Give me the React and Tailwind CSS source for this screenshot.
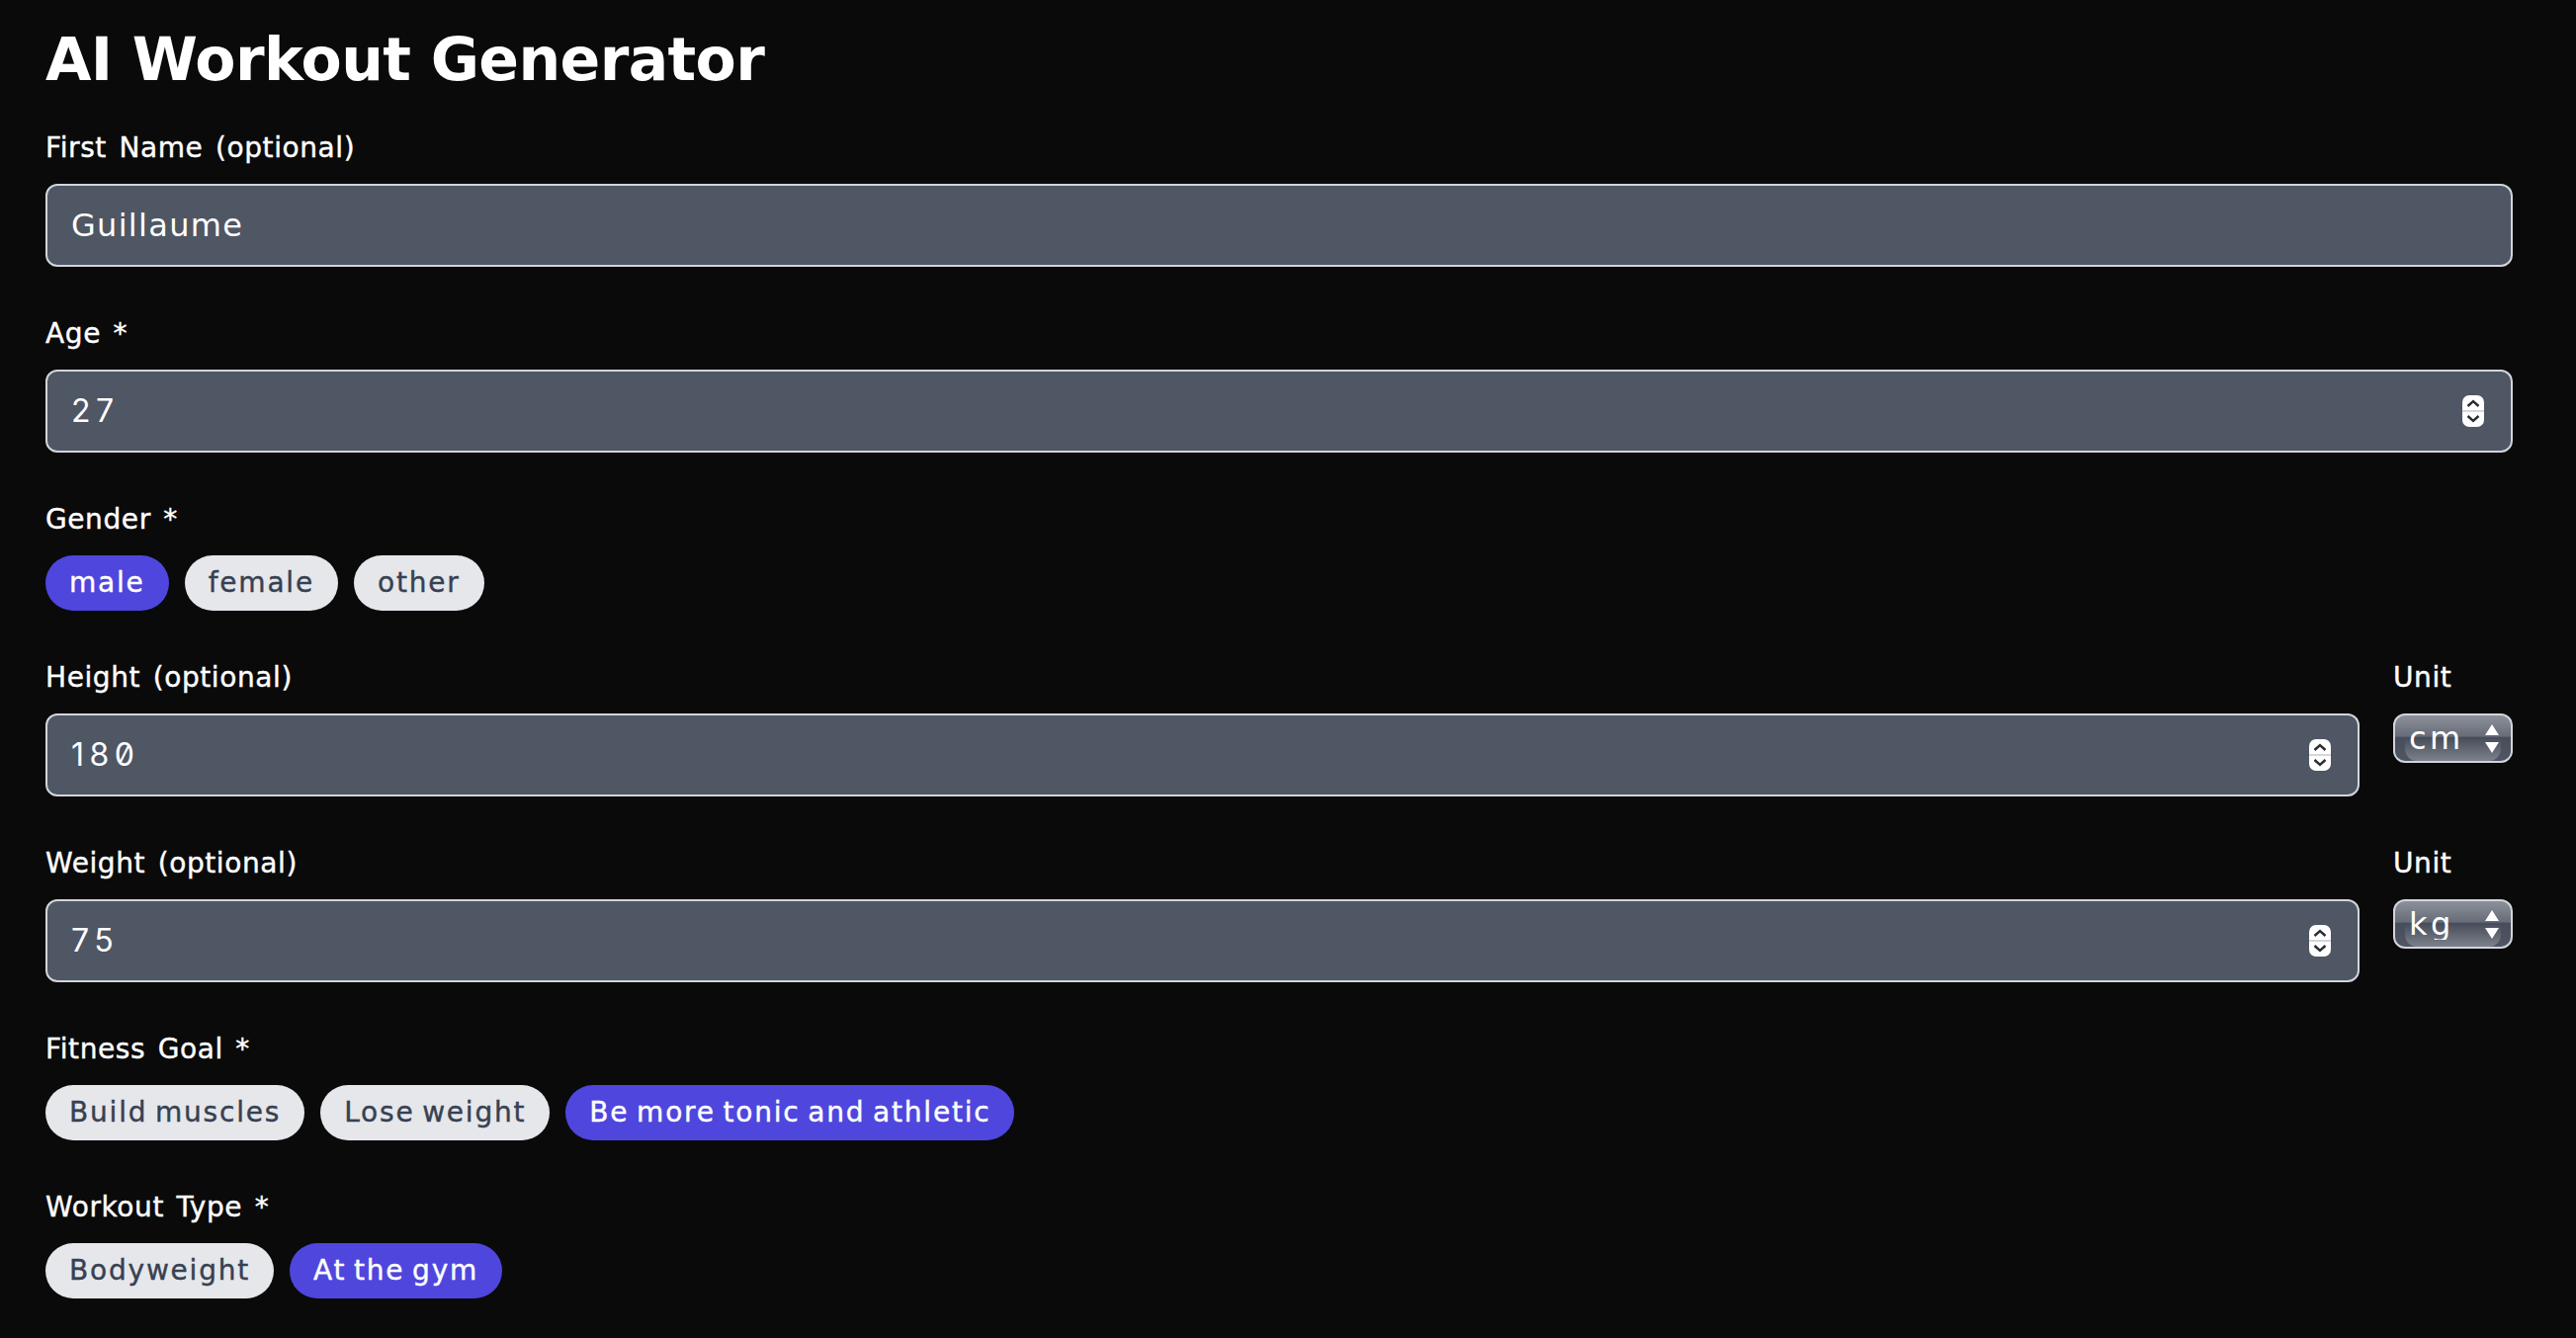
const font = "font-['DejaVu_Sans',sans-serif]"

function Label({ children }) {
  return <label className="block h-10 mb-4 text-[28px] leading-10 tracking-[0.6px] [word-spacing:3px] [-webkit-text-stroke:0.4px_currentColor] text-white">{children}</label>
}

function Field({ label, value, number }) {
  return (
    <div>
      <Label>{label}</Label>
      <div className="flex items-center h-[84px] px-6 rounded-xl border-2 border-[#d1d5db] bg-[#4f5664]">
        <input
          type="text"
          readOnly
          value={value}
          className={`flex-1 min-w-0 bg-transparent text-[32px] text-white outline-none ${
            number ? "font-['Inter',sans-serif] slashed-zero tracking-[5.5px]" : 'tracking-[1.3px]'
          }`}
        />
        {number && <Spinner />}
      </div>
    </div>
  )
}

function Spinner() {
  return (
    <svg width="22" height="32" viewBox="0 0 22 32" className="shrink-0 mr-[3px]">
      <rect width="22" height="32" rx="7" fill="#fff" />
      <rect y="15" width="22" height="2" fill="#d4d6da" />
      <path d="M5.5 11 11 6l5.5 5" fill="none" stroke="#2b2d33" strokeWidth="2.4" />
      <path d="M5.5 21 11 26l5.5-5" fill="none" stroke="#2b2d33" strokeWidth="2.4" />
    </svg>
  )
}

function UnitSelect({ options, value }) {
  return (
    <div className="shrink-0 w-[121px]">
      <Label>Unit</Label>
      <div className="relative h-[50px] rounded-xl border-2 border-[#d1d5db] overflow-hidden bg-[linear-gradient(#8d919a_0%,#666c78_46%,#474d5a_48%,#4f5664_100%)]">
        <div className="absolute left-[10px] right-[10px] bottom-0 h-[22px] rounded-b-xl bg-[linear-gradient(#4a505d,#7d818b)]" />
        <select
          defaultValue={value}
          className="relative appearance-none w-full h-full pl-[14px] bg-transparent text-[32px] leading-none tracking-[3.5px] text-white outline-none"
        >
          {options.map((o) => (
            <option key={o}>{o}</option>
          ))}
        </select>
        <svg width="16" height="29" viewBox="0 0 16 29" className="absolute right-[11px] top-[9px] pointer-events-none">
          <path d="M8 0l7 11H1z M8 29l7-11H1z" fill="#fff" />
        </svg>
      </div>
    </div>
  )
}

function Chips({ label, options, selected }) {
  return (
    <div>
      <Label>{label}</Label>
      <div className="flex gap-4">
        {options.map((o) => (
          <button
            key={o}
            type="button"
            className={`h-14 px-6 rounded-full text-[28px] leading-10 tracking-[1.8px] [word-spacing:-3px] [-webkit-text-stroke:0.4px_currentColor] ${
              o === selected ? 'bg-[#4f46de] text-white' : 'bg-[#e5e7eb] text-[#374151]'
            }`}
          >
            {o}
          </button>
        ))}
      </div>
    </div>
  )
}

export default function App() {
  return (
    <div className={`min-h-screen bg-[#0a0a0a] pt-6 pl-[46px] pr-[64px] ${font}`}>
      <h1 className="h-[72px] mb-[34px] text-[60px] leading-[72px] font-bold tracking-[-0.6px] text-white">AI Workout Generator</h1>
      <form className="space-y-12">
        <Field label="First Name (optional)" value="Guillaume" />
        <Field label="Age *" value="27" number />
        <Chips label="Gender *" options={['male', 'female', 'other']} selected="male" />
        <div className="flex gap-[34px]">
          <div className="flex-1"><Field label="Height (optional)" value="180" number /></div>
          <UnitSelect options={['cm', 'in']} value="cm" />
        </div>
        <div className="flex gap-[34px]">
          <div className="flex-1"><Field label="Weight (optional)" value="75" number /></div>
          <UnitSelect options={['kg', 'lb']} value="kg" />
        </div>
        <Chips label="Fitness Goal *" options={['Build muscles', 'Lose weight', 'Be more tonic and athletic']} selected="Be more tonic and athletic" />
        <Chips label="Workout Type *" options={['Bodyweight', 'At the gym']} selected="At the gym" />
      </form>
    </div>
  )
}
